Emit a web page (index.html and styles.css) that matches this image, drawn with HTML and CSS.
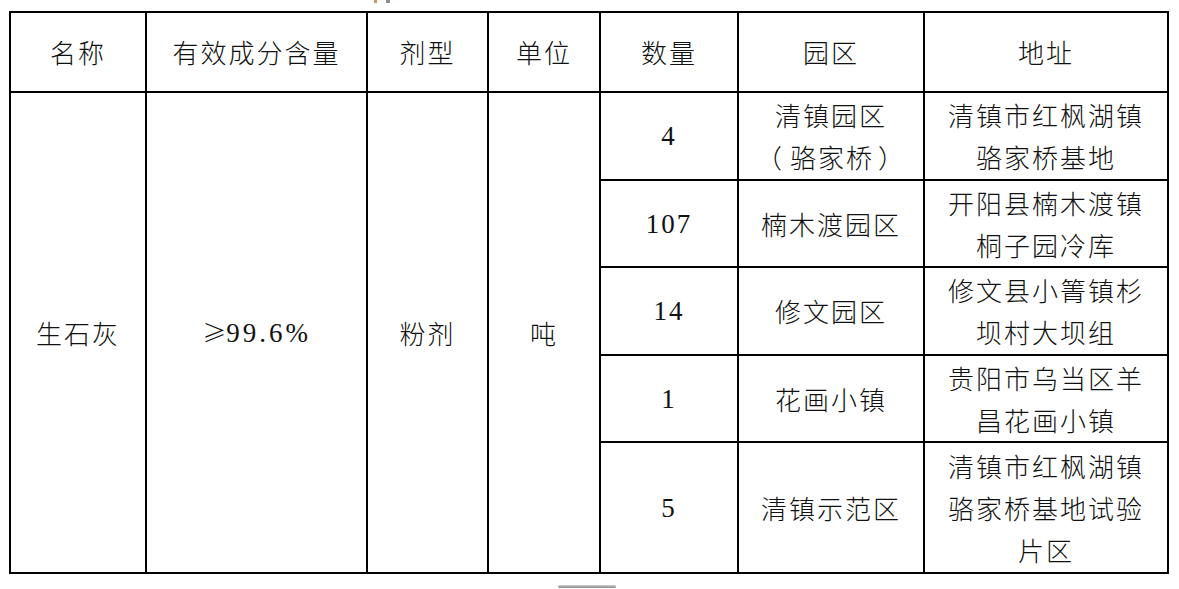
FILE: index.html
```html
<!DOCTYPE html>
<html lang="zh-CN">
<head>
<meta charset="utf-8">
<title>生石灰</title>
<link rel="stylesheet" href="styles.css">
</head>
<body>
<div class="page">
  <div class="top-mark"></div>
  <table class="grid">
    <colgroup>
      <col class="c1"><col class="c2"><col class="c3"><col class="c4"><col class="c5"><col class="c6"><col class="c7">
    </colgroup>
    <thead>
      <tr class="head">
        <th>名称</th>
        <th>有效成分含量</th>
        <th>剂型</th>
        <th>单位</th>
        <th>数量</th>
        <th>园区</th>
        <th>地址</th>
      </tr>
    </thead>
    <tbody>
      <tr class="ra">
        <td rowspan="5">生石灰</td>
        <td rowspan="5" class="pct"><span class="ge">≥</span>99.6%</td>
        <td rowspan="5">粉剂</td>
        <td rowspan="5">吨</td>
        <td class="num">4</td>
        <td>清镇园区<br><span class="pl">（</span>骆家桥<span class="pr">）</span></td>
        <td>清镇市红枫湖镇<br>骆家桥基地</td>
      </tr>
      <tr class="rb">
        <td class="num">107</td>
        <td>楠木渡园区</td>
        <td>开阳县楠木渡镇<br>桐子园冷库</td>
      </tr>
      <tr class="ra">
        <td class="num">14</td>
        <td>修文园区</td>
        <td>修文县小箐镇杉<br>坝村大坝组</td>
      </tr>
      <tr class="rb">
        <td class="num">1</td>
        <td>花画小镇</td>
        <td>贵阳市乌当区羊<br>昌花画小镇</td>
      </tr>
      <tr class="rc">
        <td class="num">5</td>
        <td>清镇示范区</td>
        <td>清镇市红枫湖镇<br>骆家桥基地试验<br>片区</td>
      </tr>
    </tbody>
  </table>
  <div class="scroll-hint"></div>
</div>
</body>
</html>
```

FILE: styles.css
```css
html, body {
  margin: 0;
  padding: 0;
  background: #ffffff;
}

.page {
  position: relative;
  width: 1179px;
  height: 589px;
  padding: 11px 0 0 9px;
  box-sizing: border-box;
  overflow: hidden;
}

.grid {
  border-collapse: collapse;
  table-layout: fixed;
  width: 1158px;
  font-family: "Noto Sans CJK SC", "Noto Sans", sans-serif;
  font-weight: 300;
  font-size: 26px;
  letter-spacing: 2px;
  color: #111;
}

.c1 { width: 136px; }
.c2 { width: 221px; }
.c3 { width: 121px; }
.c4 { width: 112px; }
.c5 { width: 138px; }
.c6 { width: 186px; }
.c7 { width: 244px; }

.grid th,
.grid td {
  border: 2px solid #000;
  padding: 0 8px;
  text-align: center;
  vertical-align: middle;
  line-height: 42px;
  font-weight: 300;
}

.head { height: 80px; }
.ra { height: 88px; }
.rb { height: 87px; }
.rc { height: 131px; }

.grid .num {
  font-family: "Liberation Serif", "Times New Roman", serif;
  font-size: 27px;
  font-weight: 400;
  letter-spacing: 2px;
}

.grid .pct {
  font-family: "Liberation Serif", "Times New Roman", serif;
  font-size: 27px;
  font-weight: 400;
  letter-spacing: 3px;
}

.ge {
  font-family: "Noto Sans CJK SC", sans-serif;
  font-weight: 300;
  font-size: 24px;
  letter-spacing: 0;
}

.pl {
  margin-right: 6px;
}

.pr {
  margin-left: 4px;
}

.top-mark {
  position: absolute;
  left: 366px;
  top: 0;
  width: 28px;
  height: 3px;
  background: linear-gradient(90deg, transparent 0 30%, #c89a60 30% 40%, transparent 40% 70%, #8a8f9a 70% 85%, transparent 85%);
}

.scroll-hint {
  position: absolute;
  left: 558px;
  top: 585px;
  width: 58px;
  height: 3px;
  border-radius: 2px;
  background: linear-gradient(180deg, #cfcfcf, #8a8a8a);
}
```
